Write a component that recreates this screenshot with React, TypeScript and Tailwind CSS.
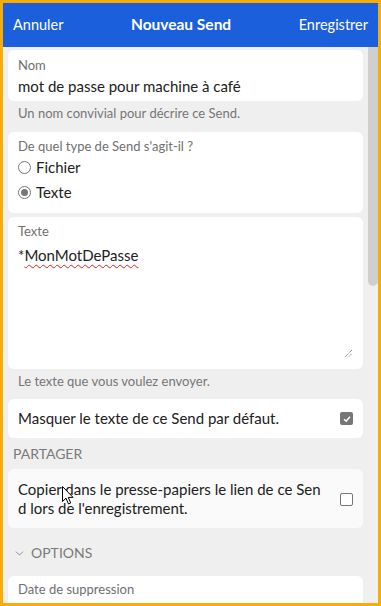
import { ChevronDown } from "lucide-react";

const label = "text-[13px] leading-[17px] text-[#707070]";
const help = "px-[10px] text-[13px] leading-[18px] text-[#767676]";

function Radio({ checked, text }: { checked?: boolean; text: string }) {
  return (
    <div className="flex h-[25px] items-center gap-[5px]">
      <span className="flex h-[13px] w-[13px] items-center justify-center rounded-full border border-[#767676] bg-white">
        {checked && <span className="h-[7px] w-[7px] rounded-full bg-[#767676]" />}
      </span>
      <span className="text-[15px] text-[#212121]">{text}</span>
    </div>
  );
}

function Checkbox({ checked }: { checked?: boolean }) {
  return checked ? (
    <span className="flex h-[13px] w-[13px] items-center justify-center rounded-[2px] bg-[#767676]">
      <svg viewBox="0 0 12 12" className="h-[10px] w-[10px]">
        <path d="M2.5 6.2 5 8.6 9.6 3.4" fill="none" stroke="white" strokeWidth="1.8" />
      </svg>
    </span>
  ) : (
    <span className="h-[13px] w-[13px] rounded-[2px] border border-[#767676] bg-white" />
  );
}

export default function App() {
  return (
    <div
      className="flex h-[606px] w-[381px] flex-col overflow-hidden border-[3px] border-[#f8ad06] bg-[#efefef]"
      style={{ fontFamily: 'Lato, "Open Sans", sans-serif' }}
    >
      {/* Header */}
      <header className="flex h-[44px] shrink-0 items-center justify-between bg-[#1b5fdc] px-[10px] text-[14.5px] text-white">
        <span>Annuler</span>
        <span className="text-[15.5px] font-bold">Nouveau Send</span>
        <span>Enregistrer</span>
      </header>

      <div className="flex min-h-0 flex-1">
        <main className="relative min-w-0 flex-1 overflow-hidden px-[5px] pt-[3px]">
          {/* Nom */}
          <div className="rounded-[6px] bg-white px-[10px] pt-[7px] pb-[3px]">
            <div className={label}>Nom</div>
            <div className="text-[15px] leading-[24px] text-[#212121]">mot de passe pour machine à café</div>
          </div>
          <div className={`${help} pt-[3px] pb-[10px]`}>Un nom convivial pour décrire ce Send.</div>

          {/* Type */}
          <div className="rounded-[6px] bg-white px-[10px] pt-[6px] pb-[8px]">
            <div className={label}>De quel type de Send s'agit-il ?</div>
            <Radio text="Fichier" />
            <Radio checked text="Texte" />
          </div>

          {/* Texte */}
          <div className="relative mt-[4px] h-[152px] rounded-[6px] bg-white px-[10px] pt-[6px]">
            <div className={label}>Texte</div>
            <div className="pt-[3px] text-[15px] leading-[24px] text-[#212121]">
              *<span className="underline decoration-[#e02020] decoration-wavy decoration-1 underline-offset-[3px]">MonMotDePasse</span>
            </div>
            <svg viewBox="0 0 10 10" className="absolute right-[10px] bottom-[11px] h-[9px] w-[9px]">
              <path d="M1 9 9 1M5 9 9 5" stroke="#555" strokeWidth="1" strokeDasharray="1 1" />
            </svg>
          </div>
          <div className={`${help} pt-[3px] pb-[9px]`}>Le texte que vous voulez envoyer.</div>

          {/* Masquer */}
          <div className="flex h-[39px] items-center justify-between rounded-[6px] bg-white px-[10px]">
            <span className="text-[15px] text-[#212121]">Masquer le texte de ce Send par défaut.</span>
            <Checkbox checked />
          </div>

          <div className="px-[5px] pt-[6px] pb-[5px] text-[14px] leading-[20px] text-[#7a7a7a]">PARTAGER</div>

          {/* Copier */}
          <div className="flex items-center justify-between rounded-[6px] bg-[#fafafa] pt-[11px] pr-[10px] pb-[10px] pl-[10px]">
            <span className="text-[15px] leading-[19px] whitespace-nowrap text-[#212121]">
              Copier dans le presse-papiers le lien de ce Sen
              <br />
              d lors de l'enregistrement.
            </span>
            <Checkbox />
          </div>

          <div className="flex items-center gap-[5px] px-[5px] pt-[15px] pb-[13px] text-[14px] leading-[20px] text-[#7a7a7a]">
            <ChevronDown className="h-[13px] w-[13px]" strokeWidth={1.5} />
            <span>OPTIONS</span>
          </div>

          <div className="h-[60px] rounded-[6px] bg-white px-[10px] pt-[5px]">
            <div className={label}>Date de suppression</div>
          </div>

          {/* mouse cursor */}
          <svg viewBox="0 0 12 19" className="absolute top-[439px] left-[59px] h-[19px] w-[12px]">
            <path d="M0.5 0.5V15.5L4 12.2 6.5 18 8.7 17 6.3 11.4H11Z" fill="white" stroke="black" strokeWidth="1" strokeLinejoin="round" />
          </svg>
        </main>

        {/* scrollbar */}
        <div className="w-[10px] shrink-0 bg-[#f0f0f0]">
          <div className="h-[239px] rounded-b-[5px] bg-[#cfcfcf]" />
        </div>
      </div>
    </div>
  );
}
